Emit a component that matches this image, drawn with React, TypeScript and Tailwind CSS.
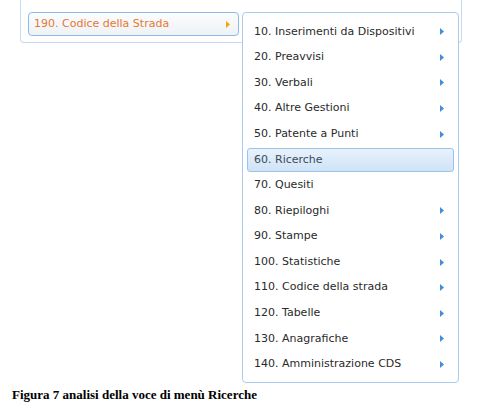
const items = [
    { label: "10. Inserimenti da Dispositivi", sub: true },
    { label: "20. Preavvisi", sub: true },
    { label: "30. Verbali", sub: true },
    { label: "40. Altre Gestioni", sub: true },
    { label: "50. Patente a Punti", sub: true },
    { label: "60. Ricerche", sub: false, active: true },
    { label: "70. Quesiti", sub: false },
    { label: "80. Riepiloghi", sub: true },
    { label: "90. Stampe", sub: true },
    { label: "100. Statistiche", sub: true },
    { label: "110. Codice della strada", sub: true },
    { label: "120. Tabelle", sub: true },
    { label: "130. Anagrafiche", sub: true },
    { label: "140. Amministrazione CDS", sub: true },
]

const Arrow = ({ color }: { color: string }) => (
    <svg width="4" height="7" viewBox="0 0 4 7" className="shrink-0">
        <polygon points="0,0 4,3.5 0,7" fill={color} />
    </svg>
)

export default function App() {
    return (
        <div className="relative w-[500px] h-[411px] bg-white overflow-hidden flex flex-col" style={{ fontFamily: '"DejaVu Sans", Verdana, sans-serif' }}>
            {/* outer menu panel, top is cut off */}
            <div className="ml-[20px] w-[442px] h-[43px] border border-t-0 border-[#c3daf1] rounded-b-[4px] pl-[7px] pt-[12px]">
                <div className="w-[211px] h-[24px] flex items-center justify-between pl-[5px] pr-[8px] border border-[#8dbbe8] rounded-[4px] bg-gradient-to-b from-[#fbfcfd] to-[#eef2f6]">
                    <span className="text-[11px] text-[#e8772e]">190. Codice della Strada</span>
                    <Arrow color="#f2a60c" />
                </div>
            </div>

            {/* flyout submenu */}
            <div className="absolute left-[242px] top-[12px] w-[217px] h-[371px] bg-white border border-[#a9cbee] rounded-[4px] pt-[6px] pb-[4px] px-[4px] flex flex-col">
                {items.map((it) => (
                    <div key={it.label} className="h-[25.6px] flex items-center">
                        <div className={"w-full h-[24px] flex items-center justify-between pl-[6px] pr-[9px] rounded-[3px] border " + (it.active ? "border-[#9cc3ea] bg-gradient-to-b from-[#e8f2fc] to-[#cfe3f7]" : "border-transparent")}>
                            <span className={"text-[11px] " + (it.active ? "text-[#3a4a5a]" : "text-[#2a2a2a]")}>{it.label}</span>
                            {it.sub && <Arrow color="#3d8fe0" />}
                        </div>
                    </div>
                ))}
            </div>

            <p className="mt-[344px] ml-[12px] text-[13px] leading-[15px] font-bold text-black" style={{ fontFamily: '"Liberation Serif", "Times New Roman", serif' }}>
                Figura 7 analisi della voce di menù Ricerche
            </p>
        </div>
    )
}
